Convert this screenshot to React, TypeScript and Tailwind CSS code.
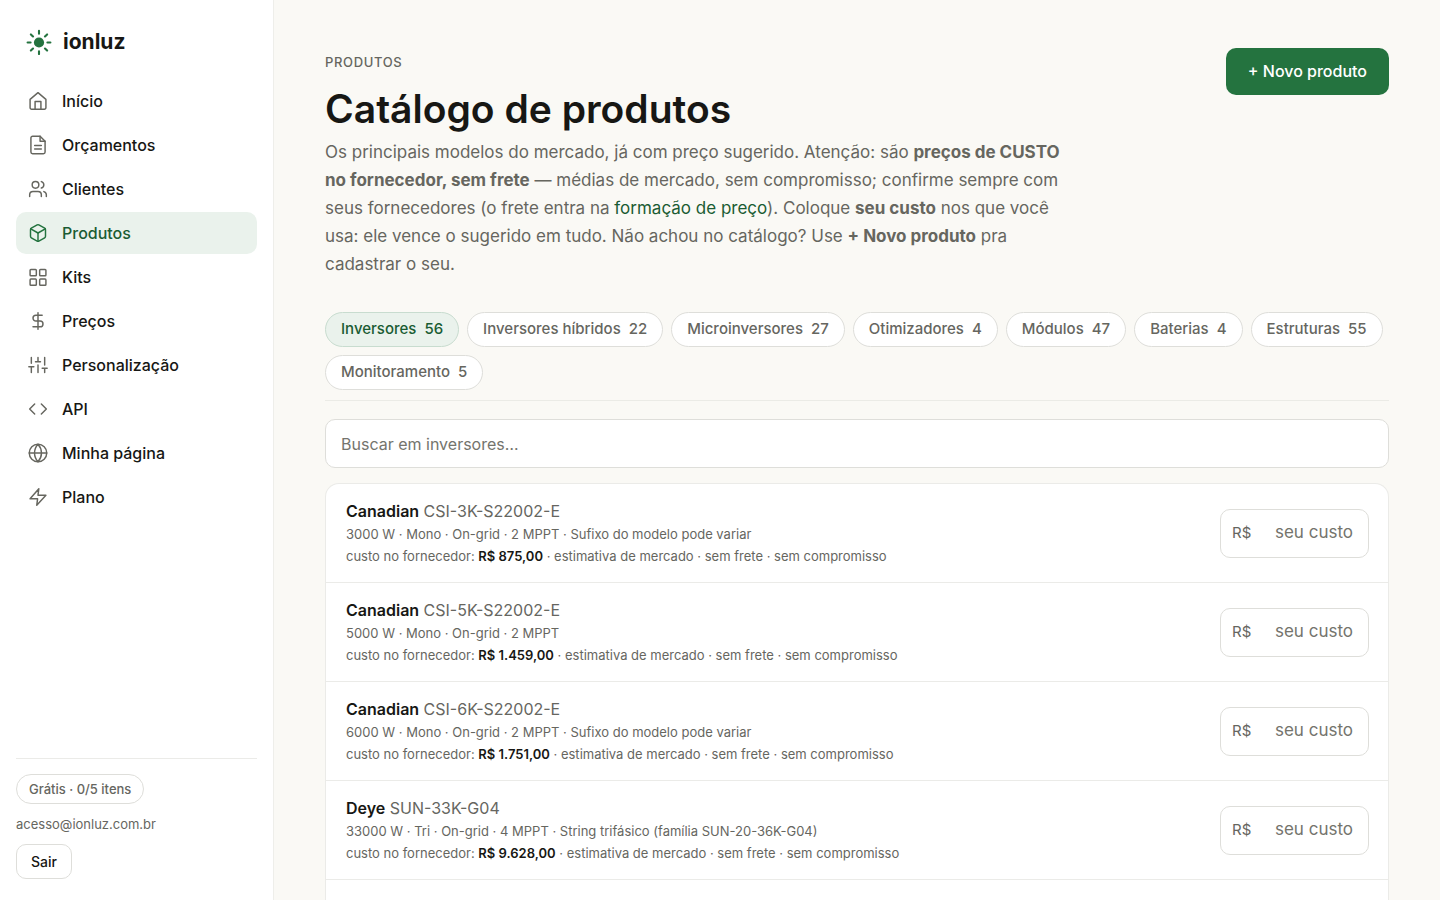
import { Box, Code, DollarSign, Users } from "lucide-react";
import type { ReactNode } from "react";

const iconClass = "size-5 shrink-0";

function LineIcon({ children }: { children: ReactNode }) {
  return (
    <svg
      viewBox="0 0 24 24"
      className={iconClass}
      fill="none"
      stroke="currentColor"
      strokeWidth="1.75"
      strokeLinecap="round"
      strokeLinejoin="round"
      aria-hidden="true"
    >
      {children}
    </svg>
  );
}

function SunLogo() {
  return (
    <svg viewBox="0 0 26 26" className="size-[26px] shrink-0 text-[#24733f]" stroke="currentColor" strokeWidth="2.1" strokeLinecap="round" aria-hidden="true">
      <circle cx="13" cy="13.5" r="5.1" fill="currentColor" stroke="none" />
      <path d="M13 1.9v2.9M13 22.2v2.9M1.6 13.5h3M21.4 13.5h3M4.9 5.4l2.1 2.1M19 19.5l2.1 2.1M4.9 21.6 7 19.5M19 7.5l2.1-2.1" />
    </svg>
  );
}

type NavItem = { label: string; icon: ReactNode; active?: boolean };

const nav: NavItem[] = [
  {
    label: "Início",
    icon: (
      <LineIcon>
        <path d="M2.5 10 12 2l9.500 8V20a1.800 1.800 0 0 1-1.800 1.800H4.300A1.800 1.800 0 0 1 2.500 20z" />
        <path d="M8.500 21.800V12.500h7v9.300" />
      </LineIcon>
    ),
  },
  {
    label: "Orçamentos",
    icon: (
      <LineIcon>
        <path d="M14.500 1.500H5.500a2 2 0 0 0-2 2v17a2 2 0 0 0 2 2h13a2 2 0 0 0 2-2V7.500z" />
        <path d="M14.500 1.500v6h6M8 12.500h8M8 16.800h8" />
      </LineIcon>
    ),
  },
  { label: "Clientes", icon: <Users className={iconClass} strokeWidth={1.75} /> },
  { label: "Produtos", icon: <Box className={iconClass} strokeWidth={1.75} />, active: true },
  {
    label: "Kits",
    icon: (
      <LineIcon>
        <rect x="2.5" y="3" width="7.5" height="7.5" rx="1" />
        <rect x="14" y="3" width="7.5" height="7.5" rx="1" />
        <rect x="2.5" y="14.500" width="7.5" height="7.5" rx="1" />
        <rect x="14" y="14.500" width="7.5" height="7.5" rx="1" />
      </LineIcon>
    ),
  },
  { label: "Preços", icon: <DollarSign className={iconClass} strokeWidth={1.75} /> },
  {
    label: "Personalização",
    icon: (
      <LineIcon>
        <path d="M4 21v-7M4 10V3M12 21v-9M12 8V3M20 21v-5M20 12V3M1 14h6M9 8h6M17 16h6" />
      </LineIcon>
    ),
  },
  { label: "API", icon: <Code className={iconClass} strokeWidth={1.75} /> },
  {
    label: "Minha página",
    icon: (
      <LineIcon>
        <circle cx="12" cy="12" r="10.5" />
        <path d="M1.5 12h21M12 1.500a16 16 0 0 1 4.200 10.500A16 16 0 0 1 12 22.500 16 16 0 0 1 7.800 12 16 16 0 0 1 12 1.500z" />
      </LineIcon>
    ),
  },
  {
    label: "Plano",
    icon: (
      <LineIcon>
        <path d="M13 2 2.500 14.200h9L10.500 22l11-12.200h-9.500z" />
      </LineIcon>
    ),
  },
];

const categories = [
  { label: "Inversores", count: 56, active: true },
  { label: "Inversores híbridos", count: 22 },
  { label: "Microinversores", count: 27 },
  { label: "Otimizadores", count: 4 },
  { label: "Módulos", count: 47 },
  { label: "Baterias", count: 4 },
  { label: "Estruturas", count: 55 },
  { label: "Monitoramento", count: 5 },
];

const products = [
  { brand: "Canadian", model: "CSI-3K-S22002-E", specs: "3000 W · Mono · On-grid · 2 MPPT · Sufixo do modelo pode variar", cost: "R$ 875,00" },
  { brand: "Canadian", model: "CSI-5K-S22002-E", specs: "5000 W · Mono · On-grid · 2 MPPT", cost: "R$ 1.459,00" },
  { brand: "Canadian", model: "CSI-6K-S22002-E", specs: "6000 W · Mono · On-grid · 2 MPPT · Sufixo do modelo pode variar", cost: "R$ 1.751,00" },
  { brand: "Deye", model: "SUN-33K-G04", specs: "33000 W · Tri · On-grid · 4 MPPT · String trifásico (família SUN-20-36K-G04)", cost: "R$ 9.628,00" },
];

function Sidebar() {
  return (
    <aside className="flex w-[274px] shrink-0 flex-col border-r border-[#eeeeea] bg-white px-4 pt-7 pb-[21px]">
      <a href="#" className="flex items-center gap-[11px] px-2.5 text-[21px] leading-7 font-bold">
        <SunLogo />
        ionluz
      </a>
      <nav className="mt-6 flex flex-col gap-0.5">
        {nav.map((item) => (
          <a
            key={item.label}
            href="#"
            aria-current={item.active ? "page" : undefined}
            className={
              item.active
                ? "flex h-[42px] items-center gap-3.5 rounded-[10px] bg-[#eaf2ec] px-3 font-medium text-[#1a5c33]"
                : "flex h-[42px] items-center gap-3.5 rounded-[10px] px-3 font-medium"
            }
          >
            <span className={item.active ? "text-[#24733f]" : "text-[#66665f]"}>{item.icon}</span>
            {item.label}
          </a>
        ))}
      </nav>
      <div className="mt-auto flex flex-col items-start border-t border-[#ebebe8] pt-[15px]">
        <span className="rounded-full border border-[#dededa] px-3 py-1 text-[13px] leading-5 font-medium text-[#66665f]">
          Grátis · 0/5 itens
        </span>
        <span className="mt-2.5 text-[13px] leading-5 text-[#66665f]">acesso@ionluz.com.br</span>
        <button type="button" className="mt-2.5 h-[35px] rounded-[10px] border border-[#dededa] px-3.5 text-sm font-medium">
          Sair
        </button>
      </div>
    </aside>
  );
}

export default function App() {
  return (
    <div className="flex h-screen overflow-hidden bg-[#faf9f5] font-['Inter','Liberation_Sans',sans-serif] text-base text-[#171714]">
      <Sidebar />
      <main className="min-w-0 flex-1 overflow-hidden px-[51px] pt-12">
        <header className="flex items-start justify-between gap-6">
          <div className="max-w-[740px]">
            <p className="pt-1 text-[13px] leading-5 font-medium tracking-wider text-[#66665f] uppercase">Produtos</p>
            <h1 className="mt-3 text-[39px] leading-[50px] font-semibold">Catálogo de produtos</h1>
            <p className="mt-1 text-[17px] leading-7 text-[#66665f]">
              Os principais modelos do mercado, já com preço sugerido. Atenção: são <strong>preços de CUSTO no fornecedor, sem frete</strong> — médias de mercado, sem compromisso; confirme sempre com seus fornecedores (o frete entra na{" "}
              <a href="#" className="text-[#1a5c33]">formação de preço</a>). Coloque <strong>seu custo</strong> nos que você usa: ele vence o sugerido em tudo. Não achou no catálogo? Use <strong>+ Novo produto</strong> pra cadastrar o seu.
            </p>
          </div>
          <button type="button" className="h-[47px] shrink-0 rounded-[10px] bg-[#24733f] px-[22px] pb-0.5 font-medium text-white">
            + Novo produto
          </button>
        </header>

        <div className="mt-[34px] flex flex-wrap gap-2 border-b border-[#ebebe6] pb-2.5">
          {categories.map((c) => (
            <button
              key={c.label}
              type="button"
              aria-pressed={!!c.active}
              className={
                c.active
                  ? "flex h-[35px] items-center gap-2 rounded-full border border-[#c8dccf] bg-[#eaf2ec] px-[15px] text-[15px] font-medium text-[#1a5c33]"
                  : "flex h-[35px] items-center gap-2 rounded-full border border-[#dededa] bg-white px-[15px] text-[15px] font-medium text-[#66665f]"
              }
            >
              <span>{c.label}</span>
              <span>{c.count}</span>
            </button>
          ))}
        </div>

        <input
          type="search"
          aria-label="Buscar em inversores"
          placeholder="Buscar em inversores…"
          className="mt-[18px] block h-[49px] w-full rounded-[10px] border border-[#dededa] bg-white px-[15px] text-base placeholder:text-[#74746d]"
        />

        <ul className="mt-[15px] divide-y divide-[#ebebe8] rounded-t-[14px] border border-b-0 border-[#ebebe8] bg-white">
          {products.map((p) => (
            <li key={p.model} className="flex items-center justify-between gap-6 pt-[15px] pr-[19px] pb-[15px] pl-5">
              <div className="min-w-0 text-[13px] leading-[22px] text-[#66665f]">
                <h2 className="text-base leading-6">
                  <span className="font-semibold text-[#171714]">{p.brand}</span> {p.model}
                </h2>
                <p>{p.specs}</p>
                <p>
                  custo no fornecedor: <strong className="font-semibold text-[#171714]">{p.cost}</strong> · estimativa de mercado · sem frete · sem compromisso
                </p>
              </div>
              <label className="flex h-[49px] w-[149px] shrink-0 items-center rounded-[10px] border border-[#dededa] bg-white px-[11px] text-[15px] text-[#66665f]">
                R$
                <input
                  type="text"
                  inputMode="decimal"
                  aria-label={`Seu custo para ${p.brand} ${p.model}`}
                  placeholder="seu custo"
                  className="min-w-0 flex-1 pr-1 text-right text-[17px] outline-none placeholder:text-[#74746d]"
                />
              </label>
            </li>
          ))}
          <li className="h-6" aria-hidden="true" />
        </ul>
      </main>
    </div>
  );
}
